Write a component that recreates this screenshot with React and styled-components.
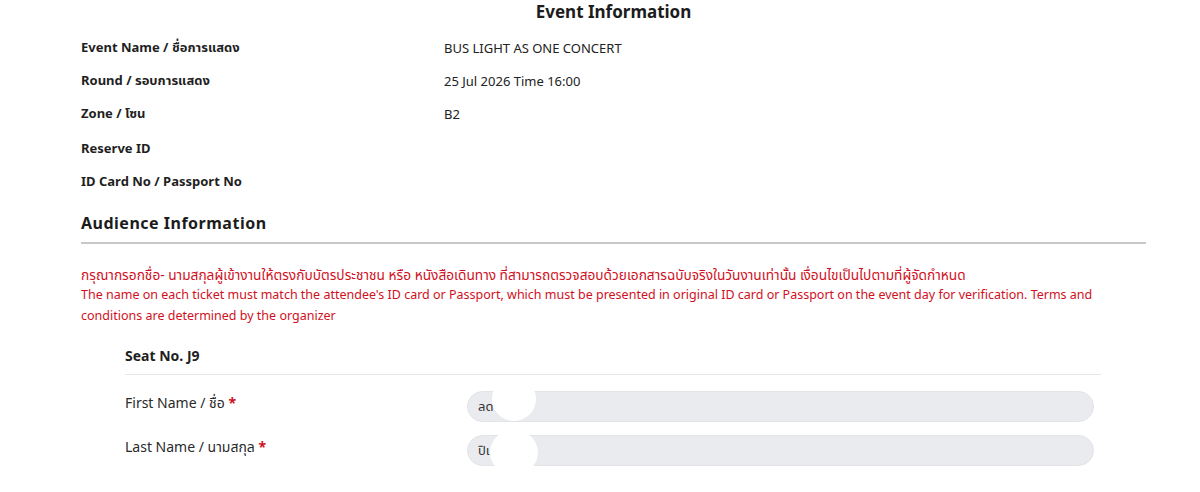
import React from "react";
import styled, { createGlobalStyle } from "styled-components";

const Global = createGlobalStyle`
  html, body { margin: 0; padding: 0; background: #fff; }
  body {
    font-family: "Noto Sans", "Noto Sans Thai", "Liberation Sans", sans-serif;
    color: #222;
  }
`;

const Page = styled.div`
  width: 1200px;
  height: 492px;
  overflow: hidden;
  box-sizing: border-box;
  padding: 0 54px 0 81px;
`;

const Title = styled.h2`
  margin: 0;
  padding-top: 1px;
  text-align: center;
  font-size: 17px;
  font-weight: 700;
  line-height: 22px;
  color: #1c1c1c;
`;

const InfoGrid = styled.div`
  display: grid;
  grid-template-columns: 363px 1fr;
  grid-auto-rows: 33.4px;
  margin-top: 8px;
  align-items: center;
`;

const InfoLabel = styled.div`
  font-size: 13px;
  font-weight: 700;
  color: #1f1f1f;
`;

const InfoValue = styled.div`
  font-size: 13px;
  color: #222;
`;

const SectionTitle = styled.h3`
  margin: 14px 0 0;
  font-size: 16px;
  font-weight: 700;
  letter-spacing: 0.5px;
  color: #1c1c1c;
  line-height: 22px;
  padding-bottom: 8px;
  border-bottom: 2px solid #c8c8c8;
`;

const Notice = styled.div`
  margin: 21px 0 0;
  color: #d0101e;
`;

const NoticeLine = styled.p`
  margin: 0;
  font-size: ${(p) => p.$size}px;
  line-height: 20.5px;
`;

const SeatBlock = styled.div`
  margin: 20px 45px 0 44px;
`;

const SeatTitle = styled.div`
  font-size: 14px;
  font-weight: 700;
  color: #1f1f1f;
  padding-bottom: 9px;
  border-bottom: 1px solid #e6e6e6;
`;

const FieldRow = styled.div`
  display: grid;
  grid-template-columns: 342px 627px;
  align-items: start;
  margin-top: ${(p) => p.$gap}px;
`;

const FieldLabel = styled.label`
  font-size: 14px;
  color: #2a2a2a;
  padding-top: 2px;
`;

const Required = styled.span`
  color: #d0101e;
  font-weight: 700;
`;

const InputWrap = styled.div`
  position: relative;
  height: 31px;
`;

const Input = styled.div`
  box-sizing: border-box;
  height: 31px;
  border-radius: 16px;
  background: #e9ebee;
  border: 1px solid #e2e4e8;
  padding: 0 10px;
  display: flex;
  align-items: center;
  font-size: 13px;
  color: #333;
`;

/* white patch laid over part of a filled-in value */
const Blot = styled.span`
  position: absolute;
  left: ${(p) => p.$x}px;
  top: ${(p) => p.$y}px;
  width: ${(p) => p.$w}px;
  height: ${(p) => p.$h}px;
  border-radius: 50%;
  background: #fff;
`;

const eventRows = [
  ["Event Name / ชื่อการแสดง", "BUS LIGHT AS ONE CONCERT"],
  ["Round / รอบการแสดง", "25 Jul 2026 Time 16:00"],
  ["Zone / โซน", "B2"],
  ["Reserve ID", ""],
  ["ID Card No / Passport No", ""],
];

export default function App() {
  return (
    <Page>
      <Global />
      <Title>Event Information</Title>
      <InfoGrid>
        {eventRows.map(([label, value]) => (
          <React.Fragment key={label}>
            <InfoLabel>{label}</InfoLabel>
            <InfoValue>{value}</InfoValue>
          </React.Fragment>
        ))}
      </InfoGrid>
      <SectionTitle>Audience Information</SectionTitle>
      <Notice>
        <NoticeLine $size={13.7}>
          กรุณากรอกชื่อ- นามสกุลผู้เข้างานให้ตรงกับบัตรประชาชน หรือ หนังสือเดินทาง ที่สามารถตรวจสอบด้วยเอกสารฉบับจริงในวันงานเท่านั้น เงื่อนไขเป็นไปตามที่ผู้จัดกำหนด
        </NoticeLine>
        <NoticeLine $size={12.5}>
          The name on each ticket must match the attendee's ID card or Passport, which must be presented in original ID card or Passport on the event day for verification. Terms and conditions are determined by the organizer
        </NoticeLine>
      </Notice>
      <SeatBlock>
        <SeatTitle>Seat No. J9</SeatTitle>
        <FieldRow $gap={16}>
          <FieldLabel>
            First Name / ชื่อ <Required>*</Required>
          </FieldLabel>
          <InputWrap>
            <Input>ลด</Input>
            <Blot $x={25} $y={-14} $w={44} $h={44} />
          </InputWrap>
        </FieldRow>
        <FieldRow $gap={13}>
          <FieldLabel>
            Last Name / นามสกุล <Required>*</Required>
          </FieldLabel>
          <InputWrap>
            <Input>ปิเ</Input>
            <Blot $x={23} $y={-5} $w={48} $h={45} />
          </InputWrap>
        </FieldRow>
      </SeatBlock>
    </Page>
  );
}
